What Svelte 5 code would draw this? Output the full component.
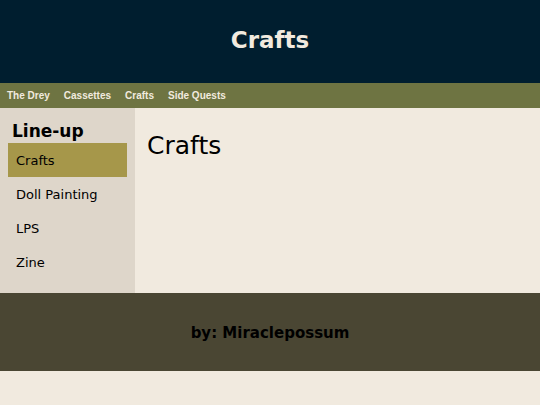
<script>
	const pages = ['The Drey', 'Cassettes', 'Crafts', 'Side Quests'];
	const crafts = ['Crafts', 'Doll Painting', 'LPS', 'Zine'];

	let current = $state('Crafts');
</script>

<header>Crafts</header>

<nav class="topnav">
	{#each pages as page}
		<a href="#{page}">{page}</a>
	{/each}
</nav>

<div class="row">
	<aside class="sidenav">
		<h2>Line-up</h2>
		<ul>
			{#each crafts as craft}
				<li>
					<a href="#{craft}" class:active={craft === current} onclick={() => (current = craft)}>{craft}</a>
				</li>
			{/each}
		</ul>
	</aside>

	<main>
		<h1>Crafts</h1>
	</main>
</div>

<footer>by: Miraclepossum</footer>

<style>
	:global(body) {
		background: #f1eadf;
		color: #000;
		font-family: "DejaVu Sans", sans-serif;
		font-size: 13px;
	}

	header {
		padding: 24px 16px 27px;
		background: #001e2f;
		color: #f1eadf;
		font-size: 23px;
		font-weight: bold;
		line-height: 32px;
		text-align: center;
	}

	.topnav {
		display: flex;
		background: #6e7442;
	}

	.topnav a {
		padding: 0 7px;
		color: #f1eadf;
		font-family: "Liberation Sans", sans-serif;
		font-size: 10px;
		font-weight: bold;
		line-height: 25px;
		text-decoration: none;
	}

	.row {
		display: flex;
	}

	.sidenav {
		box-sizing: border-box;
		width: 25%;
		padding: 12px 8px 14px;
		background: #ded6ca;
	}

	.sidenav h2 {
		margin: 0;
		padding: 0 4px;
		font-size: 17px;
		line-height: 23px;
	}

	.sidenav ul {
		margin: 0;
		padding: 0;
		list-style: none;
	}

	.sidenav a {
		display: block;
		padding: 2px 8px 0;
		color: #000;
		line-height: 32px;
		text-decoration: none;
	}

	.sidenav a.active {
		background: #a6974a;
	}

	main {
		flex: 1;
		padding: 22px 12px;
	}

	h1 {
		margin: 0;
		font-size: 25px;
		font-weight: normal;
		line-height: 32px;
	}

	footer {
		padding: 25px 16px 23px;
		background: #4a4633;
		font-size: 15px;
		font-weight: bold;
		line-height: 30px;
		text-align: center;
	}
</style>
